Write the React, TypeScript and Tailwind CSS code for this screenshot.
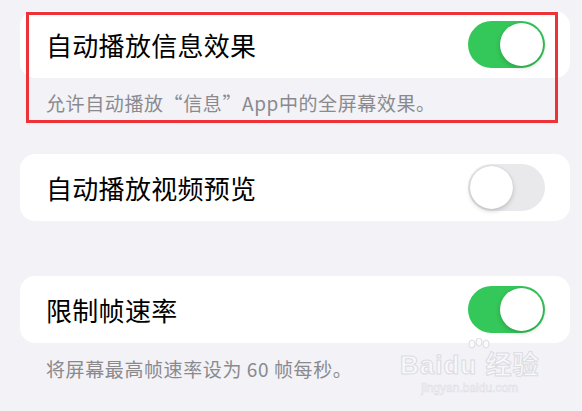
import React from "react";

const font = { fontFamily: '"Noto Sans CJK SC", "Noto Sans", sans-serif' };

function Toggle({ on }: { on: boolean }) {
  return (
    <div
      className={
        "relative h-[47px] w-[77px] shrink-0 rounded-full " +
        (on ? "bg-[#34c759]" : "bg-[#e9e9eb]")
      }
    >
      <div
        className={
          "absolute top-[2px] h-[43px] w-[43px] rounded-full bg-white shadow-[0_2px_5px_rgba(0,0,0,0.18),0_0_1px_rgba(0,0,0,0.15)] " +
          (on ? "right-[2px]" : "left-[2px]")
        }
      />
    </div>
  );
}

function Row({ title, on }: { title: string; on: boolean }) {
  return (
    <div className="flex h-[67px] items-center justify-between rounded-[15px] bg-white pl-[26px] pr-[25px]">
      <span className="text-[26px] leading-none tracking-[0.3px] text-black">{title}</span>
      <Toggle on={on} />
    </div>
  );
}

function Caption({ text }: { text: string }) {
  return (
    <div className="pl-[26px] text-[19px] leading-[24px] text-[#8a8a8e] tracking-[0.6px]">{text}</div>
  );
}

export default function App() {
  return (
    <div
      className="relative h-[411px] w-[582px] overflow-hidden bg-[#f2f2f7]"
      style={font}
    >
      <div className="flex flex-col pl-[20px] pr-[12px] pt-[11px]">
        <Row title="自动播放信息效果" on={true} />
        <div className="pt-[13px]">
          <Caption text="允许自动播放“信息”App中的全屏幕效果。" />
        </div>
        <div className="mt-[39px]">
          <Row title="自动播放视频预览" on={false} />
        </div>
        <div className="mt-[55px]">
          <Row title="限制帧速率" on={true} />
        </div>
        <div className="pt-[14px]">
          <Caption text="将屏幕最高帧速率设为 60 帧每秒。" />
        </div>
      </div>

      {/* red annotation box */}
      <div className="pointer-events-none absolute left-[26px] top-[12px] h-[111px] w-[532px] border-[3px] border-[#ee3338]" />

      {/* watermark */}
      <div className="pointer-events-none absolute left-[400px] top-[338px] flex flex-col items-center">
        <svg width="30" height="22" viewBox="0 0 30 22" className="ml-[18px]">
          <g fill="#fafafc" stroke="#dcdce2" strokeWidth="1">
            <ellipse cx="8" cy="6" rx="3" ry="4" />
            <ellipse cx="15" cy="4" rx="3" ry="4" />
            <ellipse cx="22" cy="6" rx="3" ry="4" />
          </g>
        </svg>
        <div
          className="-mt-[8px] text-[26px] font-bold leading-none tracking-[1px] text-[#f8f8fa]"
          style={{ fontFamily: '"Liberation Sans", "Noto Sans CJK SC", sans-serif', WebkitTextStroke: "1px #dcdce2" }}
        >
          Baidu 经验
        </div>
        <div
          className="mt-[4px] text-[12px] leading-none text-[#f8f8fa]"
          style={{ fontFamily: '"Liberation Sans", sans-serif', WebkitTextStroke: "0.5px #dcdce2" }}
        >
          jingyan.baidu.com
        </div>
      </div>
    </div>
  );
}
